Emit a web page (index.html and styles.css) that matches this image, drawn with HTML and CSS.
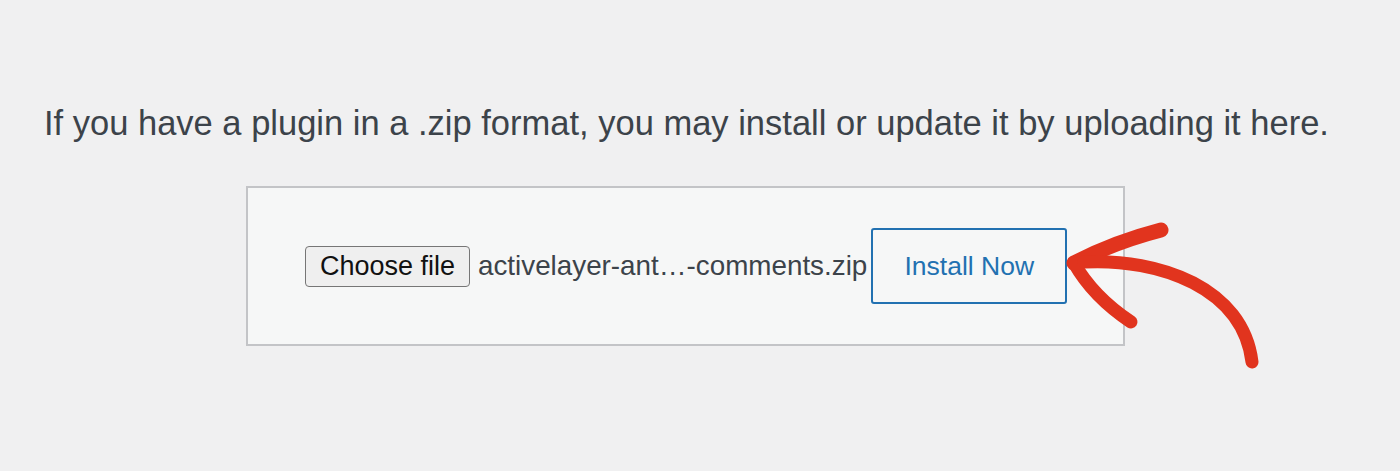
FILE: index.html
```html
<html>

<head>
    <title>Upload Plugin</title>

    <link rel="stylesheet" href="styles.css">
</head>

<body>

    <p class="install-help">If you have a plugin in a .zip format, you may install or update it by uploading it here.</p>

    <form class="upload-form">
        <div class="file-field">
            <button type="button" class="choose-btn">Choose file</button>
            <span class="file-name">activelayer-ant…-comments.zip</span>
        </div>
        <button type="button" class="install-btn">Install Now</button>
    </form>

    <svg class="arrow" width="1400" height="471" viewBox="0 0 1400 471">
        <path class="head" d="M1161 230 C1130 238, 1099 250, 1074 263" />
        <path d="M1074 263 C1087 286, 1107 306, 1131 322" />
        <path d="M1084 262 C1160 258, 1243 288, 1252 362" />
    </svg>

</body>

</html>
```

FILE: styles.css
```css
body {
    margin: 0;
    background-color: #f0f0f1;
    font-family: "Liberation Sans", Arial, sans-serif;
    color: #3c434a;
    height: 471px;
    overflow: hidden;
}

.install-help {
    margin: 0;
    padding: 102px 0 0 44px;
    font-size: 34.5px;
    line-height: 42px;
}

.upload-form {
    margin: 42px 0 0 246px;
    width: 818px;
    height: 156px;
    border: 2px solid #c3c4c7;
    background-color: #f6f7f7;
    display: flex;
    align-items: center;
    padding-left: 57px;
    box-sizing: content-box;
}

.file-field {
    display: flex;
    align-items: center;
}

.choose-btn {
    font-family: "Liberation Sans", Arial, sans-serif;
    font-size: 27px;
    color: #111;
    background-color: #efefef;
    border: 1px solid #767676;
    border-radius: 4px;
    height: 41px;
    width: 165px;
    padding: 0;
}

.file-name {
    font-size: 27.8px;
    margin-left: 8px;
    white-space: nowrap;
}

.install-btn {
    font-family: "Liberation Sans", Arial, sans-serif;
    font-size: 26.5px;
    color: #2271b1;
    background-color: #f6f7f7;
    border: 2px solid #2271b1;
    border-radius: 3px;
    width: 196px;
    height: 76px;
    padding: 0;
    margin-left: 4px;
}

.arrow {
    position: absolute;
    left: 0;
    top: 0;
    pointer-events: none;
}

.arrow path {
    fill: none;
    stroke: #e1341e;
    stroke-width: 13;
    stroke-linecap: round;
}

.arrow .head {
    stroke-width: 15;
}
```
